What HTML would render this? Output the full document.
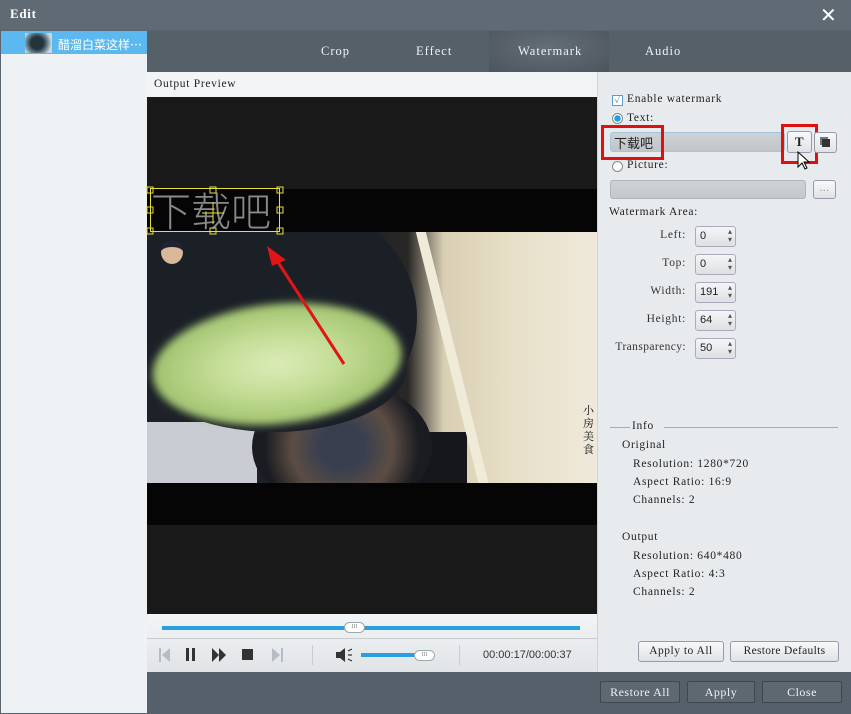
<!DOCTYPE html>
<html><head><meta charset="utf-8"><style>
*{margin:0;padding:0;box-sizing:border-box}
body{width:851px;height:714px;position:relative;overflow:hidden;background:#5a646d;font-family:"Liberation Serif","Noto Serif CJK SC",serif;font-size:11.5px;letter-spacing:0.7px;color:#222}
.a{position:absolute}
.lbl{position:absolute;color:#333;text-align:right}
.spin{position:absolute;left:695px;width:41px;height:21px;border:1px solid #aab;border-radius:3px;background:linear-gradient(#f4f5f6,#dde0e3);font-family:"Liberation Sans",sans-serif;font-size:11px;letter-spacing:0;padding:3px 0 0 4px}
.spin:after{content:"▴\A▾";white-space:pre;position:absolute;right:3px;top:1px;font-size:8px;line-height:8px;color:#555}
.btn{position:absolute;border:1px solid #99a;border-radius:3px;background:linear-gradient(#f7f8f9,#e0e3e6);text-align:center;line-height:18px;letter-spacing:0.5px}
.bb{position:absolute;top:681px;height:22px;border:1px solid #3e474f;border-radius:2px;background:#5d6870;color:#eef;text-align:center;line-height:20px;font-size:12px}
.tab{position:absolute;top:44px;color:#eef;font-size:12.5px;letter-spacing:1px}
</style></head><body>
<div class="a" style="left:0;top:0;width:851px;height:30px;background:#5f6a74"></div>
<div class="a" style="left:10px;top:6px;color:#fff;font-weight:bold;font-size:13px">Edit</div>
<div class="a" style="left:820px;top:3px;color:#fff;font-size:20px;font-family:'Liberation Sans'">✕</div>
<div class="a" style="left:1px;top:31px;width:146px;height:682px;background:#eef2f5"></div>
<div class="a" style="left:1px;top:31px;width:146px;height:23px;background:#5cb9ef"></div>
<div class="a" style="left:25px;top:33px;width:27px;height:20px;background:radial-gradient(circle at 45% 50%,#25333d 35%,#6b8796 60%,#c9d6dc 80%)"></div>
<div class="a" style="left:58px;top:36px;color:#fff;font-size:12px;letter-spacing:0;font-family:'Noto Sans CJK SC',sans-serif">醋溜白菜这样…</div>
<div class="a" style="left:147px;top:31px;width:704px;height:41px;background:#566069"></div>
<div class="a" style="left:489px;top:31px;width:120px;height:41px;background:radial-gradient(ellipse at 50% 40%,#646e77,#4c555d)"></div>
<div class="tab" style="left:321px">Crop</div>
<div class="tab" style="left:416px">Effect</div>
<div class="tab" style="left:518px">Watermark</div>
<div class="tab" style="left:645px">Audio</div>
<div class="a" style="left:147px;top:72px;width:450px;height:25px;background:#f2f4f6"></div>
<div class="a" style="left:154px;top:78px">Output Preview</div>
<div class="a" style="left:147px;top:97px;width:450px;height:517px;background:#191919"></div>
<div class="a" style="left:147px;top:189px;width:450px;height:336px;background:#050505"></div>
<div class="a" style="left:147px;top:232px;width:450px;height:251px;overflow:hidden;background:linear-gradient(90deg,#1d2228 0%,#1d2228 50%,#2a2826 58%,#d9cfb4 66%,#e8e0c8 82%,#efe9dc 100%)">
 <div class="a" style="left:-30px;top:-40px;width:300px;height:250px;border-radius:50%;background:#1b2027"></div>
 <div class="a" style="left:0;top:190px;width:110px;height:61px;background:#c9cdd3"></div>
 <div class="a" style="left:200px;top:200px;width:120px;height:51px;background:#15171b"></div>
 <div class="a" style="left:105px;top:150px;width:180px;height:130px;border-radius:50%;background:radial-gradient(circle,#3a3f4f 20%,#5c4d44 45%,#1a1c22 70%)"></div>
 <div class="a" style="left:-5px;top:70px;width:265px;height:130px;border-radius:50%;background:#1b2027"></div>
 <div class="a" style="left:5px;top:72px;width:250px;height:120px;border-radius:50%;background:radial-gradient(ellipse,#dcebb8 0%,#c4dd96 35%,#a7c775 65%,#6f8a55 100%);filter:blur(4px);transform:rotate(-6deg)"></div>
 <div class="a" style="left:300px;top:-10px;width:10px;height:270px;background:#f0ebd9;transform:skewX(14deg)"></div>
 <div class="a" style="left:436px;top:172px;color:#111;font-size:11px;line-height:13px;width:12px;letter-spacing:0;font-family:'Noto Serif CJK SC'">小房美食</div>
 <div class="a" style="left:14px;top:8px;width:22px;height:24px;border-radius:50%;background:#d9b89a;border-top:7px solid #223"></div>
</div>
<div class="a" style="left:150px;top:188px;width:130px;height:44px;border:1px solid #e6e03a"></div>
<div class="a" style="left:151px;top:187px;font-size:40px;line-height:44px;letter-spacing:0;color:#8a8a8a;font-family:'Noto Sans CJK SC',sans-serif;font-weight:300">下载吧</div>
<svg class="a" style="left:146px;top:186px" width="140" height="52"><g fill="none" stroke="#e6e03a"><rect x="1" y="1" width="6" height="6"/><rect x="64" y="1" width="6" height="6"/><rect x="131" y="1" width="6" height="6"/><rect x="1" y="21" width="6" height="6"/><rect x="131" y="21" width="6" height="6"/><rect x="1" y="42" width="6" height="6"/><rect x="64" y="42" width="6" height="6"/><rect x="131" y="42" width="6" height="6"/><path d="M67 16v22M56 27h22"/></g></svg>
<svg class="a" style="left:260px;top:240px" width="90" height="130"><path d="M84 124L14 16" stroke="#e01616" stroke-width="3"/><path d="M7 6L26 20L12 26Z" fill="#e01616"/></svg>
<div class="a" style="left:147px;top:614px;width:450px;height:58px;background:linear-gradient(#f2f4f6,#e1e4e7)"></div>
<div class="a" style="left:147px;top:638px;width:450px;height:1px;background:#c8ccd0"></div>
<div class="a" style="left:162px;top:626px;width:418px;height:4px;background:#2a9fe0"></div>
<div class="a" style="left:344px;top:622px;width:21px;height:11px;border:1px solid #9aa;border-radius:6px;background:#fff;font-size:6px;letter-spacing:0;text-align:center;line-height:9px;color:#888">III</div>
<svg class="a" style="left:155px;top:645px" width="140" height="20"><g fill="#333"><path d="M4 3h2v14H4zM15 3L7 10l8 7z" fill="#b5bcc3"/><rect x="31" y="3" width="3" height="13"/><rect x="37" y="3" width="3" height="13"/><path d="M57 3l7 7-7 7zM64 3l7 7-7 7z"/><rect x="87" y="4" width="11" height="11"/><path d="M117 3l8 7-8 7zM126 3h2v14h-2z" fill="#b5bcc3"/></g></svg>
<div class="a" style="left:312px;top:645px;width:1px;height:20px;background:#c8ccd0"></div>
<svg class="a" style="left:334px;top:645px" width="22" height="20"><path d="M2 7h4l5-4v14l-5-4H2z" fill="#333"/><path d="M14 6l4-2M14 10h4M14 14l4 2" stroke="#333" stroke-width="1.2"/></svg>
<div class="a" style="left:361px;top:653px;width:70px;height:4px;background:#2a9fe0"></div>
<div class="a" style="left:414px;top:650px;width:21px;height:11px;border:1px solid #9aa;border-radius:6px;background:#fff;font-size:6px;letter-spacing:0;text-align:center;line-height:9px;color:#888">III</div>
<div class="a" style="left:459px;top:645px;width:1px;height:20px;background:#c8ccd0"></div>
<div class="a" style="left:483px;top:649px;font-family:'Liberation Sans';letter-spacing:0;font-size:11px;color:#333">00:00:17/00:00:37</div>
<div class="a" style="left:597px;top:72px;width:254px;height:600px;background:#e8ebee;border-left:1px solid #cfd3d7"></div>
<div class="a" style="left:612px;top:95px;width:11px;height:11px;border:1px solid #5a9fd0;background:#fff;font-size:9px;letter-spacing:0;line-height:9px;color:#1a70c0;text-align:center">✓</div>
<div class="a" style="left:627px;top:93px">Enable watermark</div>
<div class="a" style="left:612px;top:113px;width:11px;height:11px;border-radius:50%;border:1px solid #888;background:radial-gradient(#1a9ef0 45%,#fff 55%)"></div>
<div class="a" style="left:627px;top:112px">Text:</div>
<div class="a" style="left:610px;top:132px;width:175px;height:20px;border:1px solid #a8c4d8;border-radius:3px;background:linear-gradient(#cdd2d6,#c0c5c9)"></div>
<div class="a" style="left:614px;top:133px;font-size:13px;letter-spacing:0;font-family:'Noto Sans CJK SC',sans-serif">下载吧</div>
<div class="a" style="left:601px;top:125px;width:63px;height:35px;border:3px solid #e01010"></div>
<div class="btn" style="left:787px;top:131px;width:25px;height:22px;font-weight:bold;font-size:13px;line-height:20px">T</div>
<div class="a" style="left:781px;top:124px;width:37px;height:40px;border:3px solid #e01010"></div>
<div class="btn" style="left:814px;top:132px;width:23px;height:21px"><div class="a" style="left:7px;top:6px;width:8px;height:8px;background:#333;box-shadow:-2px -2px 0 #777"></div></div>
<svg class="a" style="left:797px;top:151px" width="14" height="20"><path d="M1 1v15l4-4 3 6 2-1-3-6h5z" fill="#fff" stroke="#000"/></svg>
<div class="a" style="left:612px;top:161px;width:11px;height:11px;border-radius:50%;border:1px solid #888;background:#fff"></div>
<div class="a" style="left:627px;top:159px">Picture:</div>
<div class="a" style="left:610px;top:180px;width:196px;height:19px;border:1px solid #b0b5ba;border-radius:3px;background:linear-gradient(#cdd2d6,#c3c8cc)"></div>
<div class="btn" style="left:813px;top:180px;width:23px;height:19px;color:#999;line-height:15px">...</div>
<div class="a" style="left:609px;top:206px">Watermark Area:</div>
<div class="lbl" style="left:600px;width:86px;top:229px">Left:</div><div class="spin" style="top:226px">0</div>
<div class="lbl" style="left:600px;width:86px;top:257px">Top:</div><div class="spin" style="top:254px">0</div>
<div class="lbl" style="left:600px;width:86px;top:285px">Width:</div><div class="spin" style="top:282px">191</div>
<div class="lbl" style="left:600px;width:86px;top:313px">Height:</div><div class="spin" style="top:310px">64</div>
<div class="lbl" style="left:596px;width:90px;top:341px;letter-spacing:0.4px">Transparency:</div><div class="spin" style="top:338px">50</div>
<div class="a" style="left:610px;top:427px;width:20px;height:1px;background:#aab"></div>
<div class="a" style="left:632px;top:420px">Info</div>
<div class="a" style="left:664px;top:427px;width:174px;height:1px;background:#aab"></div>
<div class="a" style="left:622px;top:439px">Original</div>
<div class="a" style="left:633px;top:458px">Resolution: 1280*720</div>
<div class="a" style="left:633px;top:476px">Aspect Ratio: 16:9</div>
<div class="a" style="left:633px;top:494px">Channels: 2</div>
<div class="a" style="left:622px;top:531px">Output</div>
<div class="a" style="left:633px;top:550px">Resolution: 640*480</div>
<div class="a" style="left:633px;top:568px">Aspect Ratio: 4:3</div>
<div class="a" style="left:633px;top:586px">Channels: 2</div>
<div class="btn" style="left:638px;top:641px;width:86px;height:21px">Apply to All</div>
<div class="btn" style="left:730px;top:641px;width:109px;height:21px;letter-spacing:0.3px">Restore Defaults</div>
<div class="a" style="left:147px;top:672px;width:704px;height:42px;background:#56606a"></div>
<div class="bb" style="left:600px;width:80px;letter-spacing:0.5px">Restore All</div>
<div class="bb" style="left:687px;width:68px;letter-spacing:0.5px">Apply</div>
<div class="bb" style="left:762px;width:80px;letter-spacing:0.5px">Close</div>
</body></html>
